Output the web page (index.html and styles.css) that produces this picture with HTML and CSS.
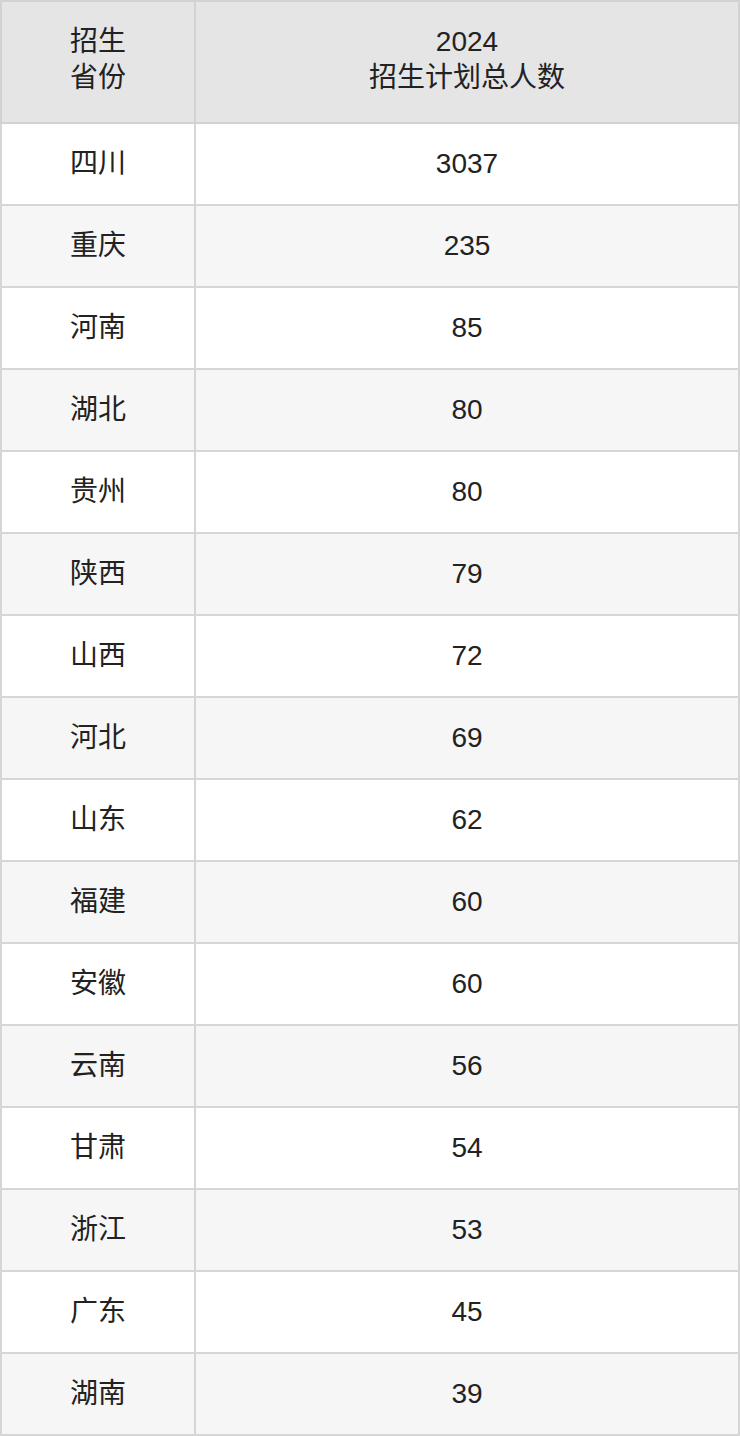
FILE: index.html
```html
<!DOCTYPE html>
<html lang="zh">
<head>
<meta charset="utf-8">
<link rel="stylesheet" href="styles.css">
</head>
<body>
<table class="plan">
  <thead>
    <tr>
      <th class="col-prov">招生<br>省份</th>
      <th class="col-num">2024<br>招生计划总人数</th>
    </tr>
  </thead>
  <tbody>
    <tr><td>四川</td><td>3037</td></tr>
    <tr><td>重庆</td><td>235</td></tr>
    <tr><td>河南</td><td>85</td></tr>
    <tr><td>湖北</td><td>80</td></tr>
    <tr><td>贵州</td><td>80</td></tr>
    <tr><td>陕西</td><td>79</td></tr>
    <tr><td>山西</td><td>72</td></tr>
    <tr><td>河北</td><td>69</td></tr>
    <tr><td>山东</td><td>62</td></tr>
    <tr><td>福建</td><td>60</td></tr>
    <tr><td>安徽</td><td>60</td></tr>
    <tr><td>云南</td><td>56</td></tr>
    <tr><td>甘肃</td><td>54</td></tr>
    <tr><td>浙江</td><td>53</td></tr>
    <tr><td>广东</td><td>45</td></tr>
    <tr><td>湖南</td><td>39</td></tr>
  </tbody>
</table>
</body>
</html>
```

FILE: styles.css
```css
html, body {
  margin: 0;
  padding: 0;
  background: #ffffff;
}

.plan {
  width: 740px;
  border-collapse: collapse;
  font-family: "Liberation Sans", "Noto Sans CJK SC", sans-serif;
  font-size: 28px;
  line-height: 36px;
  color: #222222;
  table-layout: fixed;
}

.plan th,
.plan td {
  border: 2px solid #d6d6d6;
  text-align: center;
  vertical-align: middle;
  padding: 0;
  font-weight: normal;
}

.plan .col-prov {
  width: 192px;
}

.plan thead th {
  background: #e5e5e5;
  height: 116px;
  padding-bottom: 4px;
  border-color: #d2d2d2;
}

.plan tbody td {
  height: 80px;
}

.plan tbody tr:nth-child(even) td {
  background: #f6f6f6;
}
```
